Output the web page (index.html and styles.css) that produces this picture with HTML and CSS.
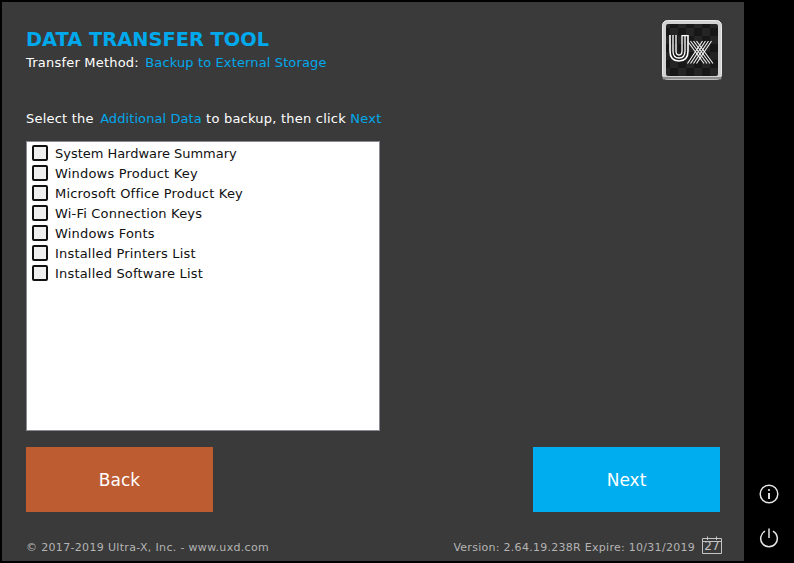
FILE: index.html
```html
<!DOCTYPE html>
<html lang="en">
<head>
<meta charset="utf-8">
<title>Data Transfer Tool</title>
<link rel="stylesheet" href="styles.css">
</head>
<body>
<div class="window">
  <main class="panel">
    <header class="header">
      <div>
        <h1 class="title">DATA TRANSFER TOOL</h1>
        <p class="subtitle">Transfer Method: <span class="accent">Backup to External Storage</span></p>
      </div>
      <div class="logo">
        <svg width="60" height="60" viewBox="0 0 60 60" aria-hidden="true">
          <defs>
            <pattern id="chk" width="16" height="16" patternUnits="userSpaceOnUse">
              <rect width="16" height="16" fill="#171717"/>
              <rect width="8" height="8" fill="#242424"/>
              <rect x="8" y="8" width="8" height="8" fill="#242424"/>
            </pattern>
          </defs>
          <rect x="0.5" y="0.5" width="59" height="59" rx="5" fill="#d2d2d2" stroke="#ececec"/>
          <rect x="0.5" y="57" width="59" height="2.5" rx="1" fill="#8e8e8e"/>
          <rect x="4" y="4" width="52" height="52" rx="2" fill="url(#chk)"/>
          <g fill="none" stroke="#fff">
            <path stroke-width="1.6" d="M8 15V31Q8 41 17 41T26 31V15"/>
            <path stroke-width="1.3" d="M11 15V31Q11 38 17 38T23 31V15"/>
            <path stroke-width="1.3" d="M14 15V31Q14 35 17 35T20 31V15"/>
            <path stroke-width="1.3" d="M20 15.6H26"/>
          </g>
          <g fill="none" stroke="#f2f2f2" stroke-width="1.1">
            <path d="M25.5 21L42 43.5M28.5 21L45 43.5M31.5 21L48 43.5M34.5 21L51 43.5"/>
            <path d="M40.5 21L25.5 43.5M43.5 21L28.5 43.5M46.5 21L31.5 43.5M49.5 21L34.5 43.5"/>
          </g>
        </svg>
      </div>
    </header>

    <p class="prompt">Select the <span class="accent lead">Additional Data</span> to backup, then click <span class="accent">Next</span></p>

    <ul class="list">
      <li class="item tight"><span class="box"></span>System Hardware Summary</li>
      <li class="item"><span class="box"></span>Windows Product Key</li>
      <li class="item"><span class="box"></span>Microsoft Office Product Key</li>
      <li class="item"><span class="box"></span>Wi-Fi Connection Keys</li>
      <li class="item"><span class="box"></span>Windows Fonts</li>
      <li class="item"><span class="box"></span>Installed Printers List</li>
      <li class="item"><span class="box"></span>Installed Software List</li>
    </ul>

    <div class="actions">
      <button class="btn back" type="button">Back</button>
      <button class="btn next" type="button">Next</button>
    </div>

    <footer class="footer">
      <span>© 2017-2019 Ultra-X, Inc. - www.uxd.com</span>
      <span class="version">Version: 2.64.19.238R Expire: 10/31/2019
        <span class="calendar">
          <svg width="20" height="18" viewBox="0 0 20 18" aria-hidden="true">
            <path d="M.5 2.5H19.5V17.5H.5ZM.5 5.5H19.5M5.5 .5V4M14.5 .5V4" fill="none" stroke="#c4c4c4"/>
          </svg>
          <span class="calendar-day">27</span>
        </span>
      </span>
    </footer>
  </main>

  <aside class="rail">
    <svg class="rail-icon" width="20" height="20" viewBox="0 0 20 20" aria-label="Information">
      <circle cx="10" cy="10" r="8.8" fill="none" stroke="#e6e6e6" stroke-width="1.5"/>
      <circle cx="10" cy="6" r="1.1" fill="#e6e6e6"/>
      <path d="M10 9V15" stroke="#e6e6e6" stroke-width="1.9"/>
    </svg>
    <svg class="rail-icon" width="20" height="20" viewBox="0 0 20 20" aria-label="Power">
      <path d="M6 3.2A8.3 8.3 0 1 0 14 3.2" fill="none" stroke="#e6e6e6" stroke-width="1.5"/>
      <path d="M10 0.5V10" stroke="#e6e6e6" stroke-width="1.5"/>
    </svg>
  </aside>
</div>
</body>
</html>
```

FILE: styles.css
```css
* { box-sizing: border-box; }
html, body { margin: 0; height: 100%; background: #000; overflow: hidden; }
body { font-family: "DejaVu Sans", Verdana, sans-serif; font-size: 13px; color: #fff; font-variant-ligatures: none; }
.window { display: flex; width: 794px; height: 563px; padding: 2px 0 2px 2px; }
.panel {
  width: 742px; height: 559px; background: #3a3a3a;
  padding: 18px 22px 0 24px; display: flex; flex-direction: column;
}
.header { display: flex; justify-content: space-between; align-items: flex-start; height: 91px; }
.title { margin: 8px 0 0; font-size: 19.4px; line-height: 24px; font-weight: 700; color: #00a8ec; }
.subtitle { margin: 2px 0 0; line-height: 18px; letter-spacing: 0.21px; }
.subtitle .accent { margin-left: 2px; letter-spacing: 0.13px; }
.accent { color: #00a8ec; }
.logo { width: 60px; height: 60px; }
.logo svg { display: block; }
.prompt { margin: 0 0 14px; line-height: 16px; letter-spacing: 0.22px; }
.prompt .lead { margin-left: 2px; letter-spacing: 0.08px; }
.list {
  list-style: none; margin: 0; padding: 1px 0 0 5px;
  width: 354px; height: 290px; background: #fff;
  border: 1px solid #8a8a94; color: #111;
  letter-spacing: 0.19px;
}
.item { display: flex; align-items: center; height: 20px; white-space: nowrap; }
.tight { letter-spacing: -0.03px; }
.box {
  width: 16px; height: 16px; margin-right: 7px; flex: none;
  background: #f0f0f0; border: 2px solid #111; border-radius: 2px;
}
.actions { display: flex; justify-content: space-between; width: 694px; margin-top: 16px; }
.btn {
  width: 187px; height: 65px; border: 0; padding: 0; color: #fff;
  font-family: inherit; font-size: 17px;
}
.back { background: #bd5b31; }
.next { background: #00adef; }
.footer {
  display: flex; justify-content: space-between; align-items: center;
  width: 696px; margin-top: 24px; font-size: 11px; color: #b4b4b4; letter-spacing: 0.33px;
}
.version { display: flex; align-items: center; gap: 7px; letter-spacing: 0.28px; }
.calendar { position: relative; display: block; width: 20px; height: 18px; margin-bottom: 4px; }
.calendar svg { display: block; }
.calendar-day {
  position: absolute; left: 0; right: 0; top: 4px; text-align: center;
  font-size: 12px; line-height: 13px; letter-spacing: 0; color: #c4c4c4;
}
.rail { flex: 1; display: flex; flex-direction: column; align-items: center; gap: 24px; padding-top: 482px; }
.rail-icon { display: block; flex: none; }
```
